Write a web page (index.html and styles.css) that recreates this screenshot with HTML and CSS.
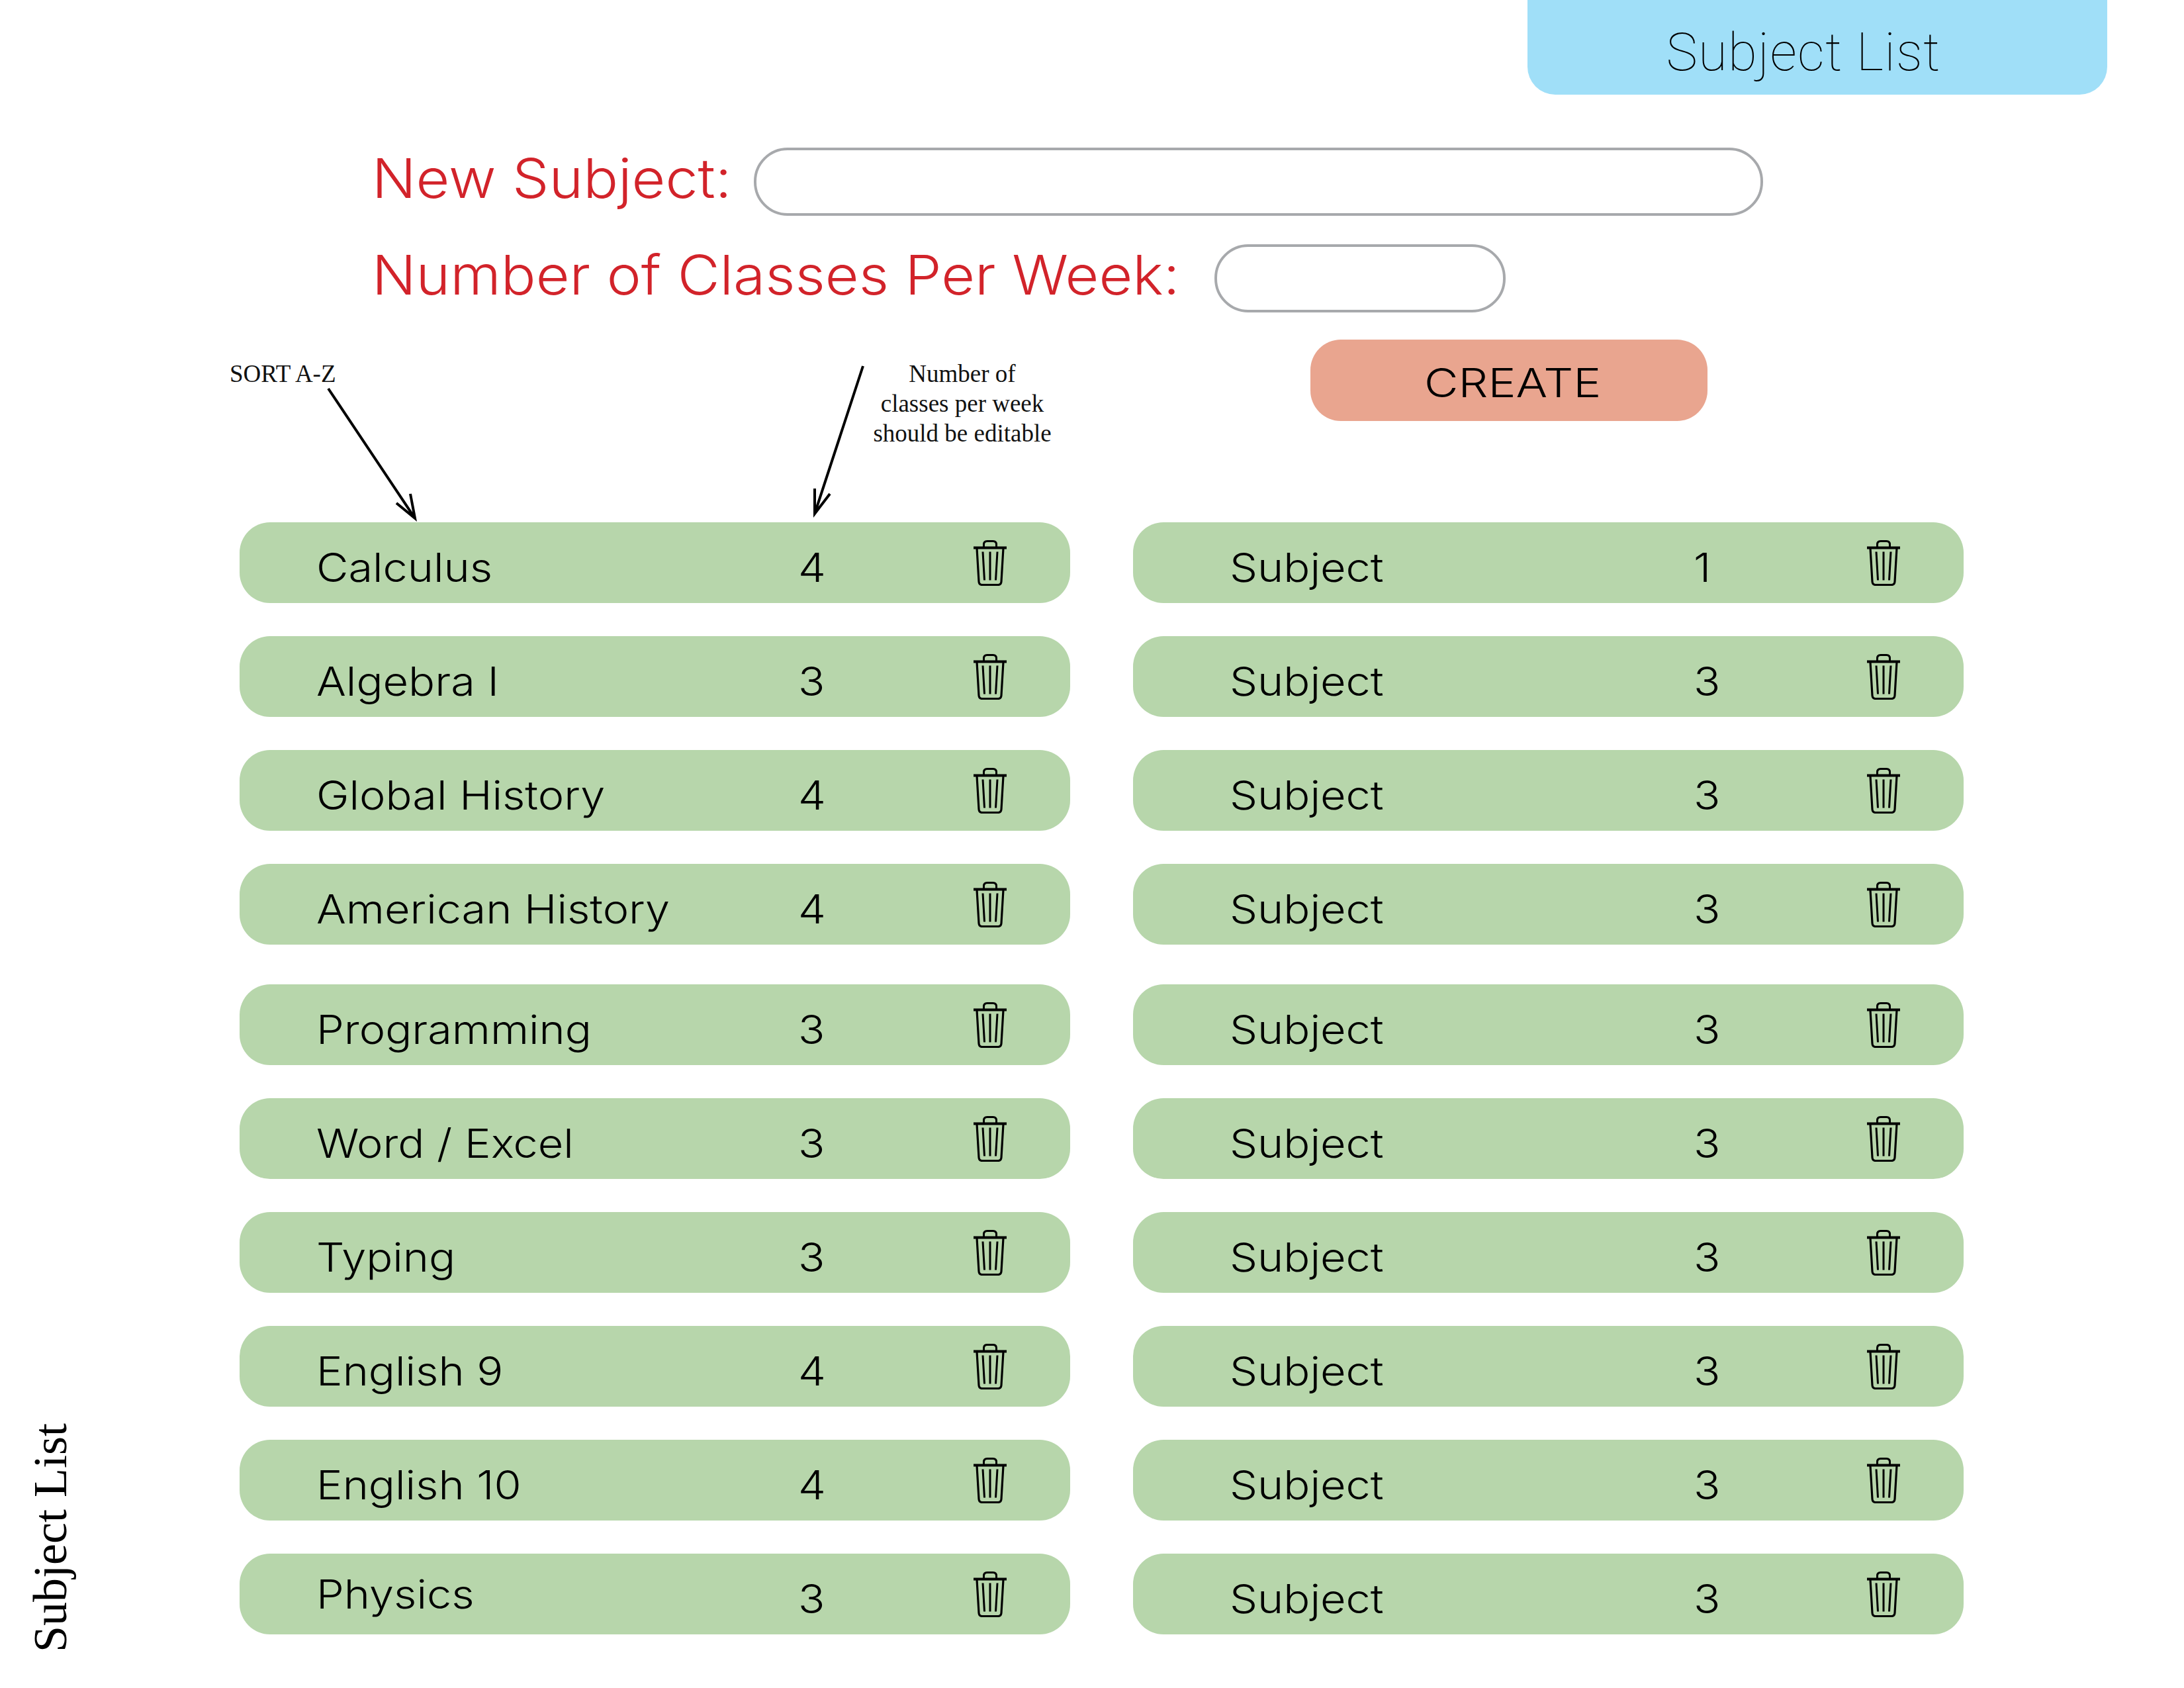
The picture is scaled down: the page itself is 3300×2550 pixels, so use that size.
FILE: index.html
```html
<!DOCTYPE html>
<html lang="en">
<head>
  <meta charset="UTF-8" />
  <title>Subject List</title>
  <link rel="stylesheet" href="styles.css">
</head>
<body>
  <svg class="defs" width="0" height="0">
    <symbol id="trash" viewBox="0 0 52 69">
      <path d="M1 11.5H51" stroke-width="4" />
      <path d="M16.5 10V6.5Q16.5 1.5 21.500 1.500H30.500Q35.500 1.500 35.500 6.500V10" stroke-width="3" />
      <path d="M6 12L9 62.500Q9.300 67.500 14 67.500H38Q42.700 67.500 43 62.500L46 12" stroke-width="3.200" />
      <path d="M15 17.500L17.500 60.500M26 17.500V60.500M37 17.500L34.500 60.500" stroke-width="3" />
    </symbol>
  </svg>

  <div class="page">
    <header class="top-bar">
      <div class="tab">Subject List</div>
    </header>

    <form class="new-subject">
      <div class="field">
        <label for="nome" class="label-name"><span class="wide">New Subject:</span></label>
        <input type="text" id="nome" class="input-name" />
      </div>
      <div class="field">
        <label for="aulas" class="label-count"><span class="wide">Number of Classes Per Week:</span></label>
        <input type="text" id="aulas" class="input-count" />
      </div>
      <button type="button" class="btn-create"><span class="wide">CREATE</span></button>
    </form>

    <main class="lists">
      <section class="col col-left">
        <div class="row"><span class="name wide">Calculus</span><span class="num wide">4</span><svg class="trash"><use href="#trash" /></svg></div>
        <div class="row"><span class="name wide">Algebra I</span><span class="num wide">3</span><svg class="trash"><use href="#trash" /></svg></div>
        <div class="row"><span class="name wide">Global History</span><span class="num wide">4</span><svg class="trash"><use href="#trash" /></svg></div>
        <div class="row"><span class="name wide">American History</span><span class="num wide">4</span><svg class="trash"><use href="#trash" /></svg></div>
        <div class="row row-break"><span class="name wide">Programming</span><span class="num wide">3</span><svg class="trash"><use href="#trash" /></svg></div>
        <div class="row"><span class="name wide">Word / Excel</span><span class="num wide">3</span><svg class="trash"><use href="#trash" /></svg></div>
        <div class="row"><span class="name wide">Typing</span><span class="num wide">3</span><svg class="trash"><use href="#trash" /></svg></div>
        <div class="row"><span class="name wide">English 9</span><span class="num wide">4</span><svg class="trash"><use href="#trash" /></svg></div>
        <div class="row"><span class="name wide">English 10</span><span class="num wide">4</span><svg class="trash"><use href="#trash" /></svg></div>
        <div class="row row-last"><span class="name wide name-high">Physics</span><span class="num wide">3</span><svg class="trash"><use href="#trash" /></svg></div>
      </section>

      <section class="col col-right">
        <div class="row"><span class="name wide">Subject</span><span class="num wide">1</span><svg class="trash"><use href="#trash" /></svg></div>
        <div class="row"><span class="name wide">Subject</span><span class="num wide">3</span><svg class="trash"><use href="#trash" /></svg></div>
        <div class="row"><span class="name wide">Subject</span><span class="num wide">3</span><svg class="trash"><use href="#trash" /></svg></div>
        <div class="row"><span class="name wide">Subject</span><span class="num wide">3</span><svg class="trash"><use href="#trash" /></svg></div>
        <div class="row row-break"><span class="name wide">Subject</span><span class="num wide">3</span><svg class="trash"><use href="#trash" /></svg></div>
        <div class="row"><span class="name wide">Subject</span><span class="num wide">3</span><svg class="trash"><use href="#trash" /></svg></div>
        <div class="row"><span class="name wide">Subject</span><span class="num wide">3</span><svg class="trash"><use href="#trash" /></svg></div>
        <div class="row"><span class="name wide">Subject</span><span class="num wide">3</span><svg class="trash"><use href="#trash" /></svg></div>
        <div class="row"><span class="name wide">Subject</span><span class="num wide">3</span><svg class="trash"><use href="#trash" /></svg></div>
        <div class="row row-last"><span class="name wide">Subject</span><span class="num wide">3</span><svg class="trash"><use href="#trash" /></svg></div>
      </section>
    </main>

    <!-- anotacoes por cima da tela -->
    <div class="note note-sort">SORT A-Z</div>
    <div class="note note-edit">Number of<br>classes per week<br>should be editable</div>
    <svg class="arrows" viewBox="0 0 3300 2550">
      <path d="M496 587L627 783M599 760L627 783L620 746" />
      <path d="M1304 553L1231 776M1231 738L1231 776L1254 746" />
    </svg>
    <div class="side-title">Subject List</div>
  </div>
</body>
</html>
```

FILE: styles.css
```css
* {
  box-sizing: border-box;
}

body {
  margin: 0;
  background-color: #fff;
  font-family: Inter, "Liberation Sans", sans-serif;
  color: #000;
}

.defs {
  position: absolute;
}

.page {
  position: relative;
  width: 3300px;
  height: 2550px;
  overflow: hidden;
}

/* the reference type is a stretched grotesque */
.wide {
  display: inline-block;
  transform: scaleX(1.11);
  transform-origin: left center;
}

.top-bar {
  display: flex;
  justify-content: flex-end;
  padding-right: 116px;
}

.tab {
  width: 876px;
  height: 143px;
  padding: 36px 42px 0 0;
  background-color: #a0dff8;
  border-radius: 0 0 42px 42px;
  font-family: Roboto, sans-serif;
  font-weight: 100;
  font-size: 80px;
  letter-spacing: 1.2px;
  line-height: 86px;
  text-align: center;
}

.new-subject {
  display: flex;
  flex-direction: column;
  padding: 80px 0 0 562px;
}

.field {
  display: flex;
  align-items: center;
  margin-bottom: 43px;
}

.field label {
  margin-bottom: 10px;
  font-size: 82px;
  font-weight: 350;
  line-height: 90px;
  color: #d2232a;
}

.field .wide {
  transform: scaleX(1.07);
}

.label-name {
  width: 577px;
}

.label-count {
  width: 1273px;
}

.field input {
  height: 103px;
  background: #fff;
  border: 4px solid #a7a9ac;
  border-radius: 51px;
}

.input-name {
  width: 1525px;
}

.input-count {
  width: 440px;
}

.btn-create {
  width: 600px;
  height: 123px;
  margin: -2px 0 0 1418px;
  padding: 7px 0 0 172px;
  background-color: #e9a58f;
  border: none;
  border-radius: 46px;
  font-family: Inter, sans-serif;
  font-size: 60px;
  font-weight: 350;
  text-align: left;
  color: #000;
}

.btn-create .wide {
  transform: scaleX(1.18);
}

.lists {
  display: flex;
  gap: 95px;
  padding: 153px 0 0 362px;
}

.col {
  display: flex;
  flex-direction: column;
  gap: 50px;
  width: 1255px;
}

.row {
  display: grid;
  align-items: center;
  justify-items: start;
  height: 122px;
  background-color: #b7d6ab;
  border-radius: 46px;
  font-size: 60px;
  font-weight: 350;
}

.col-left .row {
  grid-template-columns: 728px 264px 52px;
  padding-left: 116px;
}

.col-right .row {
  grid-template-columns: 701px 261px 52px;
  padding-left: 146px;
}

.row-break {
  margin-top: 10px;
}

.name,
.num {
  padding-top: 14px;
}

.name-high {
  padding-top: 0;
}

.trash {
  width: 52px;
  height: 69px;
}

.defs path,
.trash {
  fill: none;
  stroke: #000;
}

.note {
  position: absolute;
  font-family: "Liberation Serif", serif;
  font-size: 37px;
  line-height: 45px;
  color: #111;
}

.note-sort {
  left: 347px;
  top: 542px;
}

.note-edit {
  left: 1254px;
  top: 542px;
  width: 400px;
  text-align: center;
}

.arrows {
  position: absolute;
  left: 0;
  top: 0;
  width: 3300px;
  height: 2550px;
  pointer-events: none;
}

.arrows path {
  fill: none;
  stroke: #000;
  stroke-width: 4;
}

.side-title {
  position: absolute;
  left: 28px;
  bottom: 54px;
  writing-mode: vertical-rl;
  transform: rotate(180deg);
  font-family: "Liberation Serif", serif;
  font-size: 72px;
  line-height: 96px;
  color: #000;
}
```
